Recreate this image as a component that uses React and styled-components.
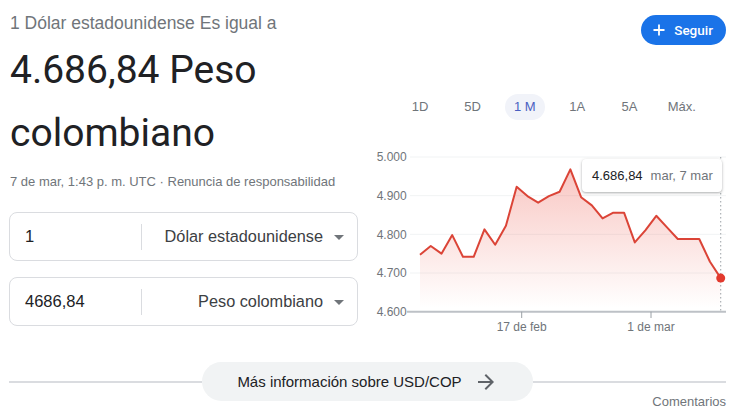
import React from "react";
import styled, { createGlobalStyle } from "styled-components";

const GlobalStyle = createGlobalStyle`
  html, body { margin: 0; padding: 0; background: #fff; }
  body { font-family: "Liberation Sans", Arial, sans-serif; color: #202124; }
`;

const Page = styled.div`
  width: 739px;
  box-sizing: border-box;
  padding: 12px 13px 0 9px;
`;

const Top = styled.div`
  display: flex;
  gap: 18px;
`;

const LeftCol = styled.div`
  width: 349px;
  flex: none;
  display: flex;
  flex-direction: column;
`;

const Eyebrow = styled.div`
  font-size: 17.5px;
  line-height: 22px;
  color: #70757a;
  padding-left: 1px;
`;

const Headline = styled.div`
  margin-top: 5px;
  font-family: Roboto, "Noto Sans", sans-serif;
  font-size: 39px;
  line-height: 63px;
  color: #202124;
  padding-left: 1px;
`;

const Stamp = styled.div`
  margin-top: 9px;
  font-size: 13px;
  line-height: 16px;
  color: #70757a;
  padding-left: 1px;
`;

const Converter = styled.div`
  margin-top: 22px;
  display: flex;
  flex-direction: column;
  gap: 16px;
`;

const Field = styled.div`
  height: 49px;
  box-sizing: border-box;
  border: 1px solid #dadce0;
  border-radius: 8px;
  display: flex;
  align-items: center;
`;

const Amount = styled.div`
  width: 131px;
  box-sizing: border-box;
  padding-left: 15px;
  font-size: 16.5px;
  color: #202124;
`;

const Separator = styled.div`
  width: 1px;
  height: 26px;
  background: #dadce0;
`;

const Currency = styled.div`
  flex: 1;
  display: flex;
  justify-content: flex-end;
  align-items: center;
  gap: 4px;
  padding-right: 6px;
  font-size: 16.3px;
  color: #3c4043;
`;

const RightCol = styled.div`
  flex: 1;
  display: flex;
  flex-direction: column;
`;

const FollowRow = styled.div`
  display: flex;
  justify-content: flex-end;
  margin-top: 3px;
`;

const FollowButton = styled.button`
  height: 30px;
  padding: 0 13px 0 12px;
  border: none;
  border-radius: 15px;
  background: #1a73e8;
  color: #fff;
  display: inline-flex;
  align-items: center;
  gap: 9px;
  font-family: Roboto, "Noto Sans", sans-serif;
  font-weight: 500;
  font-size: 13.5px;
`;

const Ranges = styled.div`
  margin-top: 49px;
  display: grid;
  grid-template-columns: repeat(6, 52.33px);
  justify-content: center;
`;

const Range = styled.div`
  display: flex;
  justify-content: center;
  align-items: center;
  height: 26px;
`;

const RangeLabel = styled.span`
  padding: 0 9px;
  height: 26px;
  line-height: 26px;
  border-radius: 13px;
  font-size: 13px;
  color: ${(p) => (p.$active ? "#4a5fc1" : "#70757a")};
  background: ${(p) => (p.$active ? "#f1f3f9" : "transparent")};
`;

const ChartWrap = styled.div`
  position: relative;
  margin-top: 28px;
  height: 190px;
  svg { display: block; }
`;

const Tooltip = styled.div`
  position: absolute;
  left: 206px;
  top: 11px;
  width: 140px;
  height: 33px;
  box-sizing: border-box;
  padding: 0 10px;
  display: flex;
  align-items: center;
  gap: 8px;
  background: #fff;
  border-radius: 4px;
  box-shadow: 0 1px 3px rgba(60, 64, 67, 0.3), 0 1px 2px rgba(60, 64, 67, 0.15);
  font-size: 13px;
  white-space: nowrap;
`;

const TipValue = styled.span`
  color: #202124;
`;

const TipDate = styled.span`
  color: #70757a;
`;

const Footer = styled.div`
  margin-top: 24px;
  display: flex;
  align-items: center;
`;

const Rule = styled.div`
  flex: 1;
  height: 2px;
  background: #dadce0;
`;

const MoreButton = styled.div`
  height: 39px;
  padding: 0 35px;
  border-radius: 20px;
  background: #f1f3f4;
  display: flex;
  align-items: center;
  gap: 12px;
  font-size: 15px;
  color: #202124;
`;

const Feedback = styled.div`
  margin-top: -7px;
  text-align: right;
  font-size: 13px;
  line-height: 16px;
  color: #70757a;
`;

const values = [
  4747, 4770, 4750, 4798, 4742, 4742, 4813, 4773, 4822, 4923, 4899, 4882,
  4899, 4910, 4968, 4896, 4875, 4841, 4856, 4856, 4779, 4811, 4848, 4818,
  4788, 4788, 4788, 4729, 4686.84,
];

const yOf = (v) => 9 + ((5000 - v) / 100) * 38.67;
const xOf = (i) => 44 + i * 10.74;

function Chart() {
  const pts = values.map((v, i) => [xOf(i), yOf(v)]);
  const line = pts.map((p) => p.join(",")).join(" ");
  const last = pts[pts.length - 1];
  const area = `${line} ${last[0]},163.7 ${pts[0][0]},163.7`;
  const grid = [5000, 4900, 4800, 4700];
  const fmt = (v) => `${Math.floor(v / 1000)}.${String(v % 1000).padStart(3, "0")}`;
  return (
    <svg width="350" height="190" viewBox="0 0 350 190">
      <defs>
        <linearGradient id="fillGrad" x1="0" y1="20" x2="0" y2="160" gradientUnits="userSpaceOnUse">
          <stop offset="0" stopColor="#ea4335" stopOpacity="0.3" />
          <stop offset="1" stopColor="#ea4335" stopOpacity="0" />
        </linearGradient>
      </defs>
      {grid.map((g) => (
        <line key={g} x1="34" x2="350" y1={yOf(g)} y2={yOf(g)} stroke="#f1f3f4" strokeWidth="1" />
      ))}
      {[...grid, 4600].map((g) => (
        <text key={g} x="30.7" y={yOf(g) + 4.3} textAnchor="end" fontSize="12" fill="#70757a" fontFamily="Liberation Sans, Arial, sans-serif">
          {fmt(g)}
        </text>
      ))}
      <polygon points={area} fill="url(#fillGrad)" />
      <line x1={last[0]} x2={last[0]} y1="9" y2="163" stroke="#9aa0a6" strokeWidth="1" strokeDasharray="1.5 2.5" />
      <polyline points={line} fill="none" stroke="#db4437" strokeWidth="2" strokeLinejoin="round" />
      <line x1="31" x2="350" y1="163.7" y2="163.7" stroke="#bdc1c6" strokeWidth="2" />
      <line x1="145.7" x2="145.7" y1="163.7" y2="170" stroke="#9aa0a6" strokeWidth="1" />
      <line x1="275" x2="275" y1="163.7" y2="170" stroke="#9aa0a6" strokeWidth="1" />
      <text x="145.7" y="182.7" textAnchor="middle" fontSize="12" fill="#70757a" fontFamily="Liberation Sans, Arial, sans-serif">17 de feb</text>
      <text x="275" y="182.7" textAnchor="middle" fontSize="12" fill="#70757a" fontFamily="Liberation Sans, Arial, sans-serif">1 de mar</text>
      <circle cx={last[0]} cy={last[1]} r="4.5" fill="#e2392d" />
    </svg>
  );
}

const DropArrow = () => (
  <svg width="24" height="24" viewBox="0 0 24 24">
    <path d="M7 10l5 5 5-5z" fill="#70757a" />
  </svg>
);

const PlusIcon = () => (
  <svg width="12" height="12" viewBox="0 0 12 12">
    <path d="M6 0.5v11M0.5 6h11" stroke="#fff" strokeWidth="1.8" fill="none" />
  </svg>
);

const ArrowIcon = () => (
  <svg width="24" height="24" viewBox="0 0 24 24">
    <path d="M12 4l-1.41 1.41L16.17 11H4v2h12.17l-5.58 5.59L12 20l8-8z" fill="#5f6368" />
  </svg>
);

const ranges = ["1D", "5D", "1 M", "1A", "5A", "Máx."];

export default function App() {
  return (
    <>
      <GlobalStyle />
      <Page>
        <Top>
          <LeftCol>
            <Eyebrow>1 Dólar estadounidense Es igual a</Eyebrow>
            <Headline>4.686,84 Peso colombiano</Headline>
            <Stamp>7 de mar, 1:43 p. m. UTC · Renuncia de responsabilidad</Stamp>
            <Converter>
              <Field>
                <Amount>1</Amount>
                <Separator />
                <Currency>
                  Dólar estadounidense
                  <DropArrow />
                </Currency>
              </Field>
              <Field>
                <Amount>4686,84</Amount>
                <Separator />
                <Currency>
                  Peso colombiano
                  <DropArrow />
                </Currency>
              </Field>
            </Converter>
          </LeftCol>
          <RightCol>
            <FollowRow>
              <FollowButton>
                <PlusIcon />
                Seguir
              </FollowButton>
            </FollowRow>
            <Ranges>
              {ranges.map((r) => (
                <Range key={r}>
                  <RangeLabel $active={r === "1 M"}>{r}</RangeLabel>
                </Range>
              ))}
            </Ranges>
            <ChartWrap>
              <Chart />
              <Tooltip>
                <TipValue>4.686,84</TipValue>
                <TipDate>mar, 7 mar</TipDate>
              </Tooltip>
            </ChartWrap>
          </RightCol>
        </Top>
        <Footer>
          <Rule />
          <MoreButton>
            Más información sobre USD/COP
            <ArrowIcon />
          </MoreButton>
          <Rule />
        </Footer>
        <Feedback>Comentarios</Feedback>
      </Page>
    </>
  );
}
